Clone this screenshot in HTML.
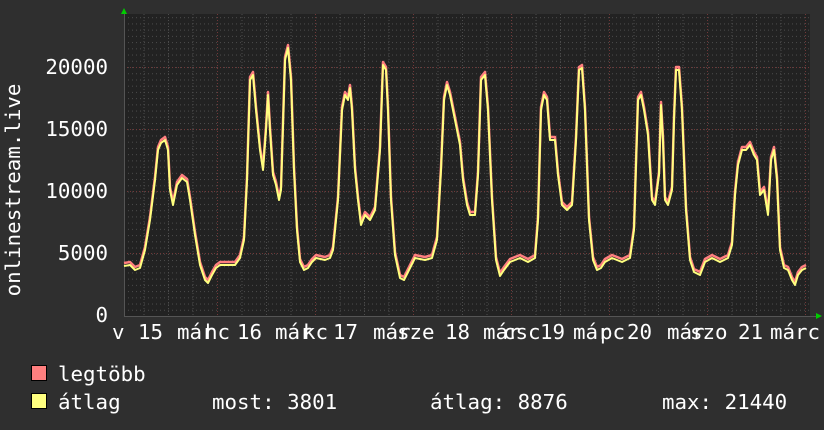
<!DOCTYPE html>
<html><head><meta charset="utf-8"><style>
html,body{margin:0;padding:0;background:#2f2f2f;}
svg{display:block;}
text{font-family:"DejaVu Sans Mono","Liberation Mono",monospace;font-size:20.8px;fill:#fff;}
</style></head><body>
<svg width="824" height="430" viewBox="0 0 824 430" xmlns="http://www.w3.org/2000/svg">
<defs>
<pattern id="hg" x="0" y="316" width="4" height="6.225" patternUnits="userSpaceOnUse">
<rect x="0" y="0" width="1" height="1" fill="#4c4c4c"/>
</pattern>
<pattern id="vg" x="119" y="14" width="24.5" height="3" patternUnits="userSpaceOnUse">
<rect x="0" y="0" width="1" height="1" fill="#4c4c4c"/>
</pattern>
</defs>
<rect width="824" height="430" fill="#2f2f2f"/>
<rect x="124" y="14" width="686" height="302" fill="#222"/>
<rect x="124" y="14" width="686" height="302" fill="url(#hg)"/>
<rect x="124" y="14" width="686" height="302" fill="url(#vg)"/>
<g stroke="#703838" stroke-width="1" stroke-dasharray="1,2">
<line x1="124" x2="810" y1="253.5" y2="253.5"/>
<line x1="124" x2="810" y1="191.5" y2="191.5"/>
<line x1="124" x2="810" y1="129.5" y2="129.5"/>
<line x1="124" x2="810" y1="67.5" y2="67.5"/>
<line y1="14" y2="316" x1="217.5" x2="217.5"/>
<line y1="14" y2="316" x1="315.5" x2="315.5"/>
<line y1="14" y2="316" x1="413.5" x2="413.5"/>
<line y1="14" y2="316" x1="511.5" x2="511.5"/>
<line y1="14" y2="316" x1="609.5" x2="609.5"/>
<line y1="14" y2="316" x1="707.5" x2="707.5"/>
<line y1="14" y2="316" x1="805.5" x2="805.5"/>
</g>
<line x1="124" y1="316.5" x2="816" y2="316.5" stroke="#555"/>
<line x1="124.5" y1="14" x2="124.5" y2="316" stroke="#555"/>
<polygon points="121,14 127,14 124,8" fill="#0c0"/>
<polygon points="816,313 816,319 822,316" fill="#0c0"/>
<polyline fill="none" stroke="#ff7f7f" stroke-width="2.5" stroke-linejoin="round" transform="translate(0,-3)" points="124,266 130,265 135,270 140,268 145,250 150,220 155,180 158,150 161,143 165,140 168,150 170,190 173,205 177,185 182,178 187,182 190,200 195,235 200,265 205,280 208,283 212,275 216,268 220,265 235,265 240,258 244,240 247,180 250,80 253,75 256,110 260,150 263,170 266,130 268,95 270,130 273,175 276,185 279,200 281,190 285,60 288,48 291,80 294,170 297,230 300,262 304,270 308,268 312,262 316,258 325,260 330,258 333,250 338,200 342,110 345,95 348,100 350,88 352,110 355,170 358,200 361,225 365,215 370,220 375,210 380,150 383,65 386,70 388,110 391,200 395,255 400,278 404,280 408,272 415,258 425,260 432,258 437,240 441,170 444,100 447,85 450,95 455,120 460,145 463,180 467,205 470,215 475,215 478,175 481,80 485,75 488,110 492,200 496,260 500,276 504,270 510,262 520,258 528,262 535,258 538,220 541,110 544,95 547,100 550,140 555,140 558,175 562,205 567,210 572,205 576,140 579,70 582,68 585,110 589,220 593,260 597,270 601,268 605,262 612,258 622,262 630,258 634,230 638,100 641,95 644,110 648,135 652,200 655,205 659,175 661,105 663,140 665,200 668,205 672,190 674,120 676,70 679,70 682,110 686,210 690,260 694,272 700,275 705,262 712,258 720,262 728,258 732,245 735,195 738,165 742,150 746,150 750,145 754,155 757,160 760,195 764,190 768,215 771,160 774,150 777,180 780,250 784,268 788,270 792,280 795,285 798,275 802,270 806,268"/>
<polyline fill="none" stroke="#ffff7f" stroke-width="2" stroke-linejoin="round" points="124,266 130,265 135,270 140,268 145,250 150,220 155,180 158,150 161,143 165,140 168,150 170,190 173,205 177,185 182,178 187,182 190,200 195,235 200,265 205,280 208,283 212,275 216,268 220,265 235,265 240,258 244,240 247,180 250,80 253,75 256,110 260,150 263,170 266,130 268,95 270,130 273,175 276,185 279,200 281,190 285,60 288,48 291,80 294,170 297,230 300,262 304,270 308,268 312,262 316,258 325,260 330,258 333,250 338,200 342,110 345,95 348,100 350,88 352,110 355,170 358,200 361,225 365,215 370,220 375,210 380,150 383,65 386,70 388,110 391,200 395,255 400,278 404,280 408,272 415,258 425,260 432,258 437,240 441,170 444,100 447,85 450,95 455,120 460,145 463,180 467,205 470,215 475,215 478,175 481,80 485,75 488,110 492,200 496,260 500,276 504,270 510,262 520,258 528,262 535,258 538,220 541,110 544,95 547,100 550,140 555,140 558,175 562,205 567,210 572,205 576,140 579,70 582,68 585,110 589,220 593,260 597,270 601,268 605,262 612,258 622,262 630,258 634,230 638,100 641,95 644,110 648,135 652,200 655,205 659,175 661,105 663,140 665,200 668,205 672,190 674,120 676,70 679,70 682,110 686,210 690,260 694,272 700,275 705,262 712,258 720,262 728,258 732,245 735,195 738,165 742,150 746,150 750,145 754,155 757,160 760,195 764,190 768,215 771,160 774,150 777,180 780,250 784,268 788,270 792,280 795,285 798,275 802,270 806,268"/>
<g text-anchor="end">
<text x="108" y="74">20000</text>
<text x="108" y="136">15000</text>
<text x="108" y="198">10000</text>
<text x="108" y="260">5000</text>
<text x="108" y="322">0</text>
</g>
<text transform="translate(20,190) rotate(-90)" text-anchor="middle">onlinestream.live</text>
<g>
<text x="112" y="339">v</text>
<text x="138" y="339">15</text><text x="177" y="339">már</text><text x="205" y="339">hc</text>
<text x="237" y="339">16</text><text x="275" y="339">már</text><text x="303" y="339">kc</text>
<text x="333" y="339">17</text><text x="373" y="339">már</text><text x="397" y="339">sze</text>
<text x="445" y="339">18</text><text x="483" y="339">már</text><text x="503" y="339">csc</text>
<text x="540" y="339">19</text><text x="573" y="339">már</text><text x="600" y="339">pc</text>
<text x="627" y="339">20</text><text x="667" y="339">már</text><text x="690" y="339">szo</text>
<text x="738" y="339">21</text><text x="770" y="339">márc</text>
</g>
<rect x="31.5" y="365.5" width="15" height="15" fill="#ff7f7f" stroke="#000"/>
<rect x="31.5" y="393.5" width="15" height="15" fill="#ffff7f" stroke="#000"/>
<text x="58" y="381">legtöbb</text>
<text x="58" y="409">átlag</text>
<text x="212" y="409">most: 3801</text>
<text x="430" y="409">átlag: 8876</text>
<text x="662" y="409">max: 21440</text>
</svg>
</body></html>
